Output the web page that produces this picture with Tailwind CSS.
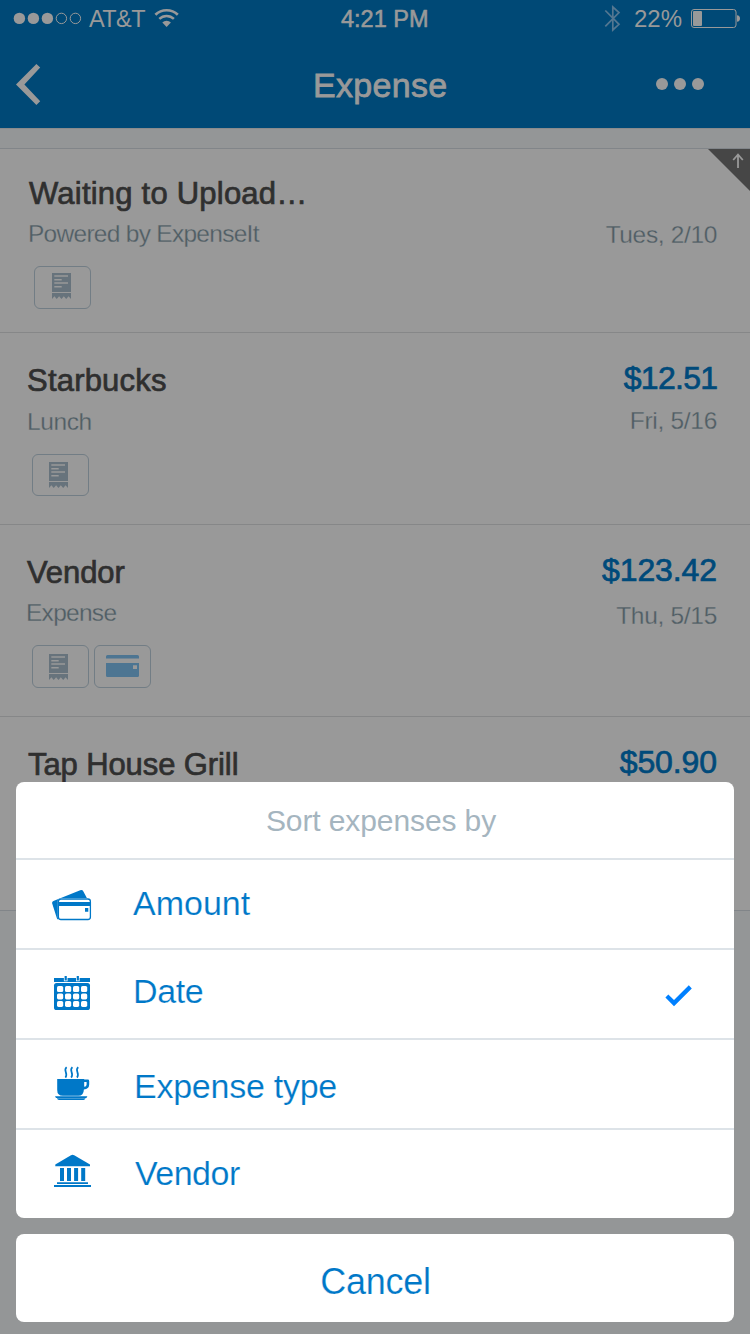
<!DOCTYPE html>
<html lang="en">
<head>
<meta charset="utf-8">
<title>Expense</title>
<script src="https://cdn.jsdelivr.net/npm/@tailwindcss/browser@4"></script>
</head>
<body class="bg-[#949697]">
<div class="relative w-[750px] h-[1334px] overflow-hidden bg-[#949697] font-['Liberation_Sans',Arial,sans-serif] whitespace-nowrap">

  <svg class="hidden">
    <symbol id="receipt" viewBox="0 0 19 26">
      <path fill="#67737c" fill-rule="evenodd" d="M0 0H19V19H0ZM2.3 2.2V3.8H16V2.2ZM2.3 6V7.6H9.7V6ZM2.3 9.2V10.8H16V9.2ZM2.3 13V14.6H9.7V13Z"/>
      <path fill="#67737c" d="M0 20H19V26L16.6 23.2L14.2 26L11.8 23.2L9.5 26L7.1 23.2L4.7 26L2.4 23.2L0 26Z"/>
    </symbol>
  </svg>

  <!-- Header -->
  <header class="h-[129px] bg-[#004976] border-b border-[#898b8d] text-[#999]">
    <div class="flex h-10 items-start">
      <svg class="ml-3 w-[72px] h-9" viewBox="12 0 72 36" fill="#999"><circle cx="19.4" cy="18.4" r="5.7"/><circle cx="33.4" cy="18.4" r="5.7"/><circle cx="47.4" cy="18.4" r="5.7"/><g fill="none" stroke="#999"><circle cx="61.4" cy="18.4" r="5.2"/><circle cx="75.4" cy="18.4" r="5.2"/></g></svg>
      <span class="ml-[5px] w-[60px] pt-1 text-[23.5px] leading-[30px] tracking-[-0.6px]">AT&amp;T</span>
      <svg class="ml-1 w-7 h-9" viewBox="153 0 28 36" fill="none" stroke="#999" stroke-width="2.7"><path d="M155.4 14.8A16 16 0 0 1 177.8 14.8"/><path d="M159.3 18.9A10.4 10.4 0 0 1 173.9 18.9" stroke-width="2.5"/><path d="M162.3 22.6A6 6 0 0 1 170.9 22.6L166.6 27Z" fill="#999" stroke="none"/></svg>
      <span class="ml-[160px] w-[100px] pt-1 text-[23.5px] leading-[30px] [-webkit-text-stroke:0.6px_#999]">4:21 PM</span>
      <svg class="ml-[162px] w-5 h-9" viewBox="603 0 20 36" fill="none" stroke="#547791" stroke-width="1.7"><path d="M605.3 10.5L619 24.3L612.8 30V7L619 12.6L605.3 26.4"/></svg>
      <span class="ml-[11px] w-[55px] pt-1 text-[24px] leading-[30px]">22%</span>
      <svg class="w-[54px] h-9" viewBox="689 0 54 36" fill="#999"><rect x="691.5" y="9.5" width="44.5" height="18" rx="2.5" fill="none" stroke="#999"/><rect x="693" y="11" width="9" height="15" rx="1"/><path d="M737 15.2Q740 15.6 740 18.5Q740 21.4 737 21.8Z"/></svg>
    </div>
    <div class="flex h-[88px]">
      <svg class="ml-3 w-9 h-[88px]" viewBox="12 40 36 88" fill="#999"><path d="M36.4 64L40.2 67.6L24.4 84.5L40.2 101.3L36.4 105L16 84.5Z"/></svg>
      <h1 class="ml-[265px] pt-[25px] text-[34px] leading-[40px] tracking-[0.3px] [-webkit-text-stroke:0.8px_#999]">Expense</h1>
      <svg class="ml-auto mr-10 w-[60px] h-[88px]" viewBox="650 40 60 88" fill="#999"><circle cx="662" cy="84" r="6"/><circle cx="680" cy="84" r="6"/><circle cx="698" cy="84" r="6"/></svg>
    </div>
  </header>

  <!-- Expense list -->
  <main class="mt-[19px] border-t border-[#818589] text-[#2f2f2f]">
    <section class="relative flex justify-between h-[184px] bg-[#999] border-b border-[#868788]">
      <div class="pl-[29px] pt-[27px]">
        <h2 class="text-[31px] leading-9 tracking-[0.22px] [-webkit-text-stroke:0.7px_#2f2f2f]">Waiting to Upload…</h2>
        <p class="-ml-px mt-[6px] text-[24.5px] leading-8 tracking-[-0.72px] text-[#505e65] [-webkit-text-stroke:0.3px_#999]">Powered by ExpenseIt</p>
        <div class="ml-[5px] mt-[16px] flex justify-center w-[57px] h-[43px] rounded-[6px] border border-[#727d85] pt-[6px] pr-[3px]"><svg class="w-[19px] h-[26px]"><use href="#receipt"/></svg></div>
      </div>
      <div class="pr-[33px] pt-[70px] text-right text-[24.5px] leading-8 tracking-[-0.35px] text-[#505e65] [-webkit-text-stroke:0.3px_#999]">Tues, 2/10</div>
      <svg class="absolute right-0 top-0 w-[42px] h-[42px]" viewBox="708 149 42 42"><path d="M708 149H750V191Z" fill="#464646"/><path d="M738 168V154.5M733.2 160L738 154.5L742.8 160" fill="none" stroke="#999" stroke-width="1.8"/></svg>
    </section>

    <section class="flex justify-between h-[192px] bg-[#999] border-b border-[#868788]">
      <div class="pl-[27px] pt-[30px]">
        <h2 class="text-[31px] leading-9 tracking-[0.2px] [-webkit-text-stroke:0.7px_#2f2f2f]">Starbucks</h2>
        <p class="mt-[7px] text-[24.5px] leading-8 tracking-[-0.4px] text-[#505e65] [-webkit-text-stroke:0.3px_#999]">Lunch</p>
        <div class="ml-[5px] mt-[16px] flex justify-center w-[57px] h-[42px] rounded-[6px] border border-[#727d85] pt-[7px] pr-[5px]"><svg class="w-[19px] h-[26px]"><use href="#receipt"/></svg></div>
      </div>
      <div class="pr-8 pt-[27px] text-right">
        <p class="text-[32px] leading-9 tracking-[-0.1px] text-[#004a7a] [font-kerning:none] [-webkit-text-stroke:0.7px_#004a7a]"><span class="tracking-[-0.7px]">$12.5</span>1</p>
        <p class="mt-[9px] pr-px text-[24.5px] leading-8 tracking-[-0.3px] text-[#505e65] [-webkit-text-stroke:0.3px_#999]">Fri, 5/16</p>
      </div>
    </section>

    <section class="flex justify-between h-[192px] bg-[#999] border-b border-[#868788]">
      <div class="pl-[27px] pt-[30px]">
        <h2 class="text-[31px] leading-9 tracking-[-0.1px] [-webkit-text-stroke:0.7px_#2f2f2f]">Vendor</h2>
        <p class="-ml-px mt-[6px] text-[24.5px] leading-8 tracking-[-0.72px] text-[#505e65] [-webkit-text-stroke:0.3px_#999]">Expense</p>
        <div class="ml-[5px] mt-[16px] flex gap-[5px]">
          <div class="flex justify-center w-[57px] h-[43px] rounded-[6px] border border-[#727d85] pt-[8px] pr-[5px]"><svg class="w-[19px] h-[26px]"><use href="#receipt"/></svg></div>
          <div class="flex justify-center w-[57px] h-[43px] rounded-[6px] border border-[#727d85] pt-[9px]"><svg class="w-[33px] h-[22px]" viewBox="0 0 33 22"><path fill="#4d7592" fill-rule="evenodd" d="M0 3.6V1.5Q0 0 1.5 0H31.5Q33 0 33 1.5V3.6ZM0 8H33V20.5Q33 22 31.5 22H1.5Q0 22 0 20.5ZM27 10.3V14H31V10.3Z"/></svg></div>
        </div>
      </div>
      <div class="pr-[33px] pt-[27px] text-right">
        <p class="text-[32px] leading-9 tracking-[-0.1px] text-[#004a7a] [-webkit-text-stroke:0.7px_#004a7a]">$123.42</p>
        <p class="mt-3 text-[24.5px] leading-8 tracking-[-0.3px] text-[#505e65] [-webkit-text-stroke:0.3px_#999]">Thu, 5/15</p>
      </div>
    </section>

    <section class="flex justify-between h-[194px] bg-[#999] border-b border-[#818589]">
      <h2 class="pl-7 pt-[30px] text-[31px] leading-9 tracking-[-0.1px] [-webkit-text-stroke:0.7px_#2f2f2f]">Tap House Grill</h2>
      <p class="pr-[33px] pt-[27px] text-[32px] leading-9 tracking-[-0.1px] text-[#004a7a] [-webkit-text-stroke:0.7px_#004a7a]">$50.90</p>
    </section>
  </main>

  <!-- Action sheet -->
  <div class="absolute inset-x-4 bottom-3 flex flex-col gap-4 text-[#0078c8]">
    <div class="rounded-lg bg-white">
      <div class="h-[78px] border-b-2 border-[#dde3e8] pl-[12px] pt-[21px] text-center text-[30px] leading-9 tracking-[-0.1px] text-[#a5b5bf]">Sort expenses by</div>

      <div class="flex h-[90px] border-b-2 border-[#dde3e8] pl-9">
        <svg class="w-10 h-[88px]" viewBox="52 860 40 88" fill="#0078c8"><path d="M52.2 903.5Q51.7 901.6 53.4 900.9L80.2 890.2Q82.4 889.5 83.4 891.4L87 898.2L58 919.6Q57.2 919.2 56.8 918Z"/><rect x="57.8" y="898" width="33.6" height="22" rx="3.2" fill="#fff"/><rect x="58.4" y="899" width="32" height="20.5" rx="2.5" fill="#fff" stroke="#0078c8" stroke-width="1.3"/><path d="M58 902H91V906H58ZM85 908H88.3V911.8H85Z"/></svg>
        <span class="ml-[41px] pt-[23px] text-[34px] leading-10 [-webkit-text-stroke:0.2px_#fff]">Amount</span>
      </div>

      <div class="flex h-[90px] border-b-2 border-[#dde3e8] pl-9">
        <svg class="w-10 h-[88px]" viewBox="52 950 40 88" fill="#0078c8"><path d="M54 978H90V982H54Z"/><path fill="#fff" d="M63.9 976H67.5V981.2H63.9ZM76 976H79.6V981.2H76Z"/><path d="M64.6 976H66.8V980.6H64.6ZM76.7 976H78.9V980.6H76.7Z"/><rect x="54" y="983" width="36" height="27" rx="2.6"/><g fill="#fff"><rect x="57" y="986" width="6.2" height="6" rx="1.6"/><rect x="65" y="986" width="6.2" height="6" rx="1.6"/><rect x="73" y="986" width="6.2" height="6" rx="1.6"/><rect x="81" y="986" width="6.2" height="6" rx="1.6"/><rect x="57" y="993.4" width="6.2" height="6" rx="1.6"/><rect x="65" y="993.4" width="6.2" height="6" rx="1.6"/><rect x="73" y="993.4" width="6.2" height="6" rx="1.6"/><rect x="81" y="993.4" width="6.2" height="6" rx="1.6"/><rect x="57" y="1000.9" width="6.2" height="6" rx="1.6"/><rect x="65" y="1000.9" width="6.2" height="6" rx="1.6"/><rect x="73" y="1000.9" width="6.2" height="6" rx="1.6"/><rect x="81" y="1000.9" width="6.2" height="6" rx="1.6"/></g></svg>
        <span class="ml-[41px] pt-[21px] text-[34px] leading-10 tracking-[-0.4px] [-webkit-text-stroke:0.2px_#fff]">Date</span>
        <svg class="ml-auto mr-10 w-8 h-[88px]" viewBox="662 950 32 88" fill="#0080ff"><path d="M665.4 997.6L668.3 994.6L674 1000L688.8 985.3L691.8 988.4L674 1006.2Z"/></svg>
      </div>

      <div class="flex h-[90px] border-b-2 border-[#dde3e8] pl-9">
        <svg class="w-10 h-[88px]" viewBox="52 1040 40 88" fill="#0078c8"><path d="M57.2 1079H84.2V1079.6H87.8Q89.2 1079.6 89.2 1081V1084.5Q89 1089.2 83.9 1089.4Q83.6 1095.8 78.5 1095.8H62.8Q57.2 1095.8 57.2 1090ZM84.2 1082V1086.8Q86.6 1086.6 86.6 1084.4V1082Z" fill-rule="evenodd"/><path d="M55 1096.3H87.4L86.4 1098H56ZM56.8 1098.2H85.6Q84.8 1100 83.5 1100H59Q57.6 1100 56.8 1098.2Z"/><path d="M66.6 1067.2C62.6 1070.6 68.8 1073.4 65.4 1077.6M72.4 1067.2C68.4 1070.6 74.6 1073.4 71.2 1077.6M78.2 1067.2C74.2 1070.6 80.4 1073.4 77 1077.6" fill="none" stroke="#0078c8" stroke-width="1.7"/></svg>
        <span class="ml-[42px] pt-[26px] text-[34px] leading-10 tracking-[-0.25px] [-webkit-text-stroke:0.2px_#fff]">Expense type</span>
      </div>

      <div class="flex h-[88px] pl-9">
        <svg class="w-10 h-[88px]" viewBox="52 1130 40 88" fill="#0078c8"><path d="M71 1155.2Q72.6 1154.5 74.2 1155.2L90 1164.6V1166.3H55.3V1164.6Z"/><path d="M60 1168H64V1181H60ZM67 1168H71V1181H67ZM74.1 1168H78.1V1181H74.1ZM81.2 1168H85.2V1181H81.2ZM57 1182.2H88V1184H57ZM54 1185H91V1187H54Z"/></svg>
        <span class="ml-[43px] pt-[23px] text-[34px] leading-10 tracking-[-0.5px] [-webkit-text-stroke:0.2px_#fff]">Vendor</span>
      </div>
    </div>

    <div class="h-[88px] rounded-lg bg-white pl-px pt-[27px] text-center text-[36px] leading-[42px] tracking-[-0.3px] [-webkit-text-stroke:0.2px_#fff]">Cancel</div>
  </div>
</div>
</body>
</html>
